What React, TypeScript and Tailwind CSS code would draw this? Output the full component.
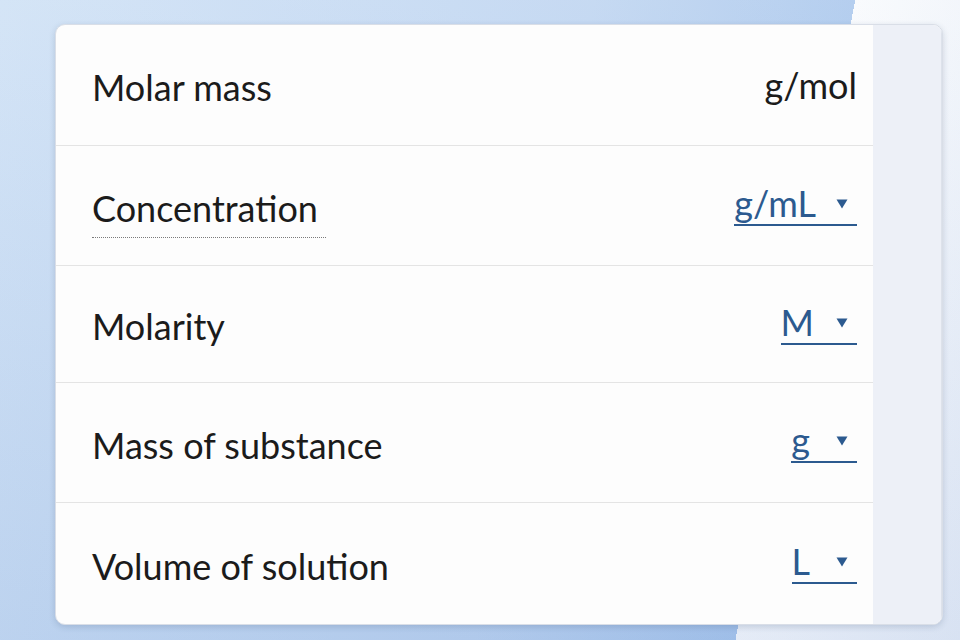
import React from "react";

const font = { fontFamily: "Lato, 'Noto Sans', sans-serif" };

function Tri() {
  return (
    <svg width="12" height="10" viewBox="0 0 12 10" className="block">
      <path d="M0.5 0.5 L11.5 0.5 L6 9.5 Z" fill="#2c5a8f" />
    </svg>
  );
}

function Unit({ text, gap }: { text: string; gap: string }) {
  return (
    <span className="inline-flex items-baseline border-b-[2.5px] border-[#2c5a8f] text-[#2c5a8f] leading-none pb-[3px]">
      <span>{text}</span>
      <span className={`${gap} pr-[9px] self-center translate-y-[1px]`}>
        <Tri />
      </span>
    </span>
  );
}

type Row = { label: string; unit: React.ReactNode; h: string; dotted?: boolean };

const rows: Row[] = [
  {
    label: "Molar mass",
    unit: <span className="text-[#1b1b1b] leading-none">g/mol</span>,
    h: "h-[121px]",
  },
  { label: "Concentration", unit: <Unit text="g/mL" gap="pl-[20px]" />, h: "h-[120px]", dotted: true },
  { label: "Molarity", unit: <Unit text="M" gap="pl-[22px]" />, h: "h-[117px]" },
  { label: "Mass of substance", unit: <Unit text="g" gap="pl-[26px]" />, h: "h-[120px]" },
  { label: "Volume of solution", unit: <Unit text="L" gap="pl-[26px]" />, h: "h-[121px]" },
];

export default function App() {
  return (
    <div
      style={font}
      className="w-[960px] h-[640px] overflow-hidden pt-[24px] pl-[55px] bg-[linear-gradient(to_bottom,rgba(255,255,255,0.15),rgba(90,130,200,0.12)),linear-gradient(100.6deg,#cde0f5_0%,#bcd3f0_55%,#a8c6ec_79.2%,#f8fafd_79.2%,#e9eff8_100%)]"
    >
      <div className="w-[888px] h-[601px] rounded-[10px] bg-[#fdfdfd] flex overflow-hidden border border-[#d9dee7] shadow-[0_2px_6px_rgba(40,60,100,0.18)]">
        <div className="flex-1 flex flex-col">
          {rows.map((r, i) => (
            <div
              key={r.label}
              className={`${r.h} flex items-center justify-between pl-[36px] pr-[16px] text-[36px] text-[#1b1b1b] ${
                i < rows.length - 1 ? "border-b border-[#e4e4e4]" : ""
              }`}
            >
              <span
                className={`leading-none translate-y-[2px] ${
                  r.dotted ? "border-b border-dotted border-[#7a7a7a] pb-[11px] pr-[8px] mt-[12px]" : ""
                }`}
              >
                {r.label}
              </span>
              {r.unit}
            </div>
          ))}
        </div>
        <div className="w-[69px] bg-[#edf0f7] border-r border-[#dde2eb]" />
      </div>
    </div>
  );
}
